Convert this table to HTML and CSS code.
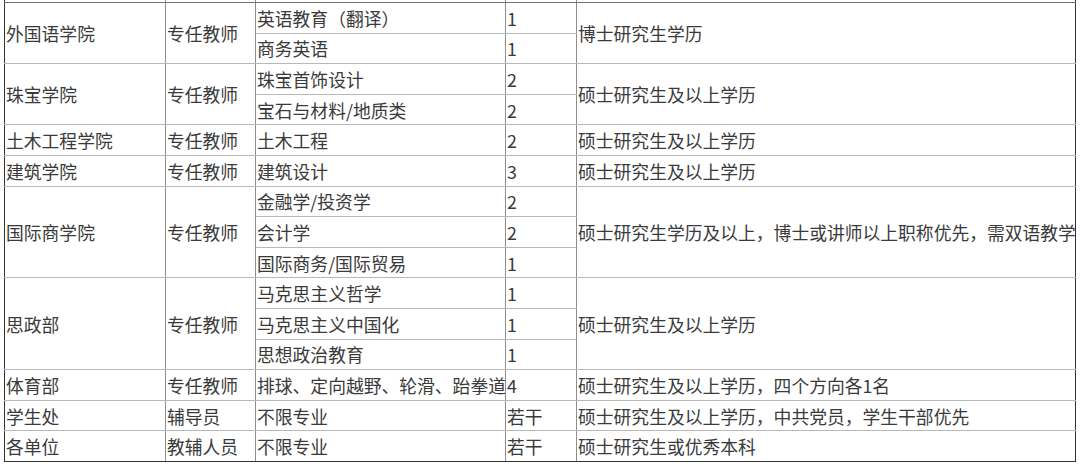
FILE: index.html
```html
<!DOCTYPE html>
<html lang="zh">
<head>
<meta charset="utf-8">
<link rel="stylesheet" href="styles.css">
</head>
<body>
<table class="jobs">
  <colgroup>
    <col class="c-unit"><col class="c-post"><col class="c-major"><col class="c-num"><col class="c-req">
  </colgroup>
  <tbody>
    <tr class="stub"><td></td><td></td><td></td><td></td><td></td></tr>
    <tr class="first"><td rowspan="2">外国语学院</td><td rowspan="2">专任教师</td><td>英语教育（翻译）</td><td>1</td><td rowspan="2">博士研究生学历</td></tr>
    <tr><td>商务英语</td><td>1</td></tr>
    <tr><td rowspan="2">珠宝学院</td><td rowspan="2">专任教师</td><td>珠宝首饰设计</td><td>2</td><td rowspan="2">硕士研究生及以上学历</td></tr>
    <tr><td>宝石与材料/地质类</td><td>2</td></tr>
    <tr><td>土木工程学院</td><td>专任教师</td><td>土木工程</td><td>2</td><td>硕士研究生及以上学历</td></tr>
    <tr><td>建筑学院</td><td>专任教师</td><td>建筑设计</td><td>3</td><td>硕士研究生及以上学历</td></tr>
    <tr><td rowspan="3">国际商学院</td><td rowspan="3">专任教师</td><td>金融学/投资学</td><td>2</td><td rowspan="3">硕士研究生学历及以上，博士或讲师以上职称优先，需双语教学</td></tr>
    <tr><td>会计学</td><td>2</td></tr>
    <tr><td>国际商务/国际贸易</td><td>1</td></tr>
    <tr><td rowspan="3">思政部</td><td rowspan="3">专任教师</td><td>马克思主义哲学</td><td>1</td><td rowspan="3">硕士研究生及以上学历</td></tr>
    <tr><td>马克思主义中国化</td><td>1</td></tr>
    <tr><td>思想政治教育</td><td>1</td></tr>
    <tr><td>体育部</td><td>专任教师</td><td>排球、定向越野、轮滑、跆拳道</td><td>4</td><td>硕士研究生及以上学历，四个方向各1名</td></tr>
    <tr><td>学生处</td><td>辅导员</td><td>不限专业</td><td>若干</td><td>硕士研究生及以上学历，中共党员，学生干部优先</td></tr>
    <tr><td>各单位</td><td>教辅人员</td><td>不限专业</td><td>若干</td><td>硕士研究生或优秀本科</td></tr>
  </tbody>
</table>
</body>
</html>
```

FILE: styles.css
```css
html, body {
  margin: 0;
  padding: 0;
  background: #ffffff;
}
body {
  padding-left: 4px;
}
.jobs {
  border-collapse: collapse;
  table-layout: fixed;
  width: 1071px;
  border-left: 1px solid #333333;
  border-right: 1px solid #333333;
  border-bottom: 1px solid #333333;
  border-top: hidden;
  font-family: "Noto Sans CJK SC", "Microsoft YaHei", sans-serif;
  font-size: 17.8px;
  color: #3a3a3a;
}
.c-unit { width: 161px; }
.c-post { width: 90px; }
.c-major { width: 250px; }
.c-num { width: 71px; }
.c-req { width: 499px; }
.jobs td {
  border-top: 1px solid #b8b8b8;
  border-bottom: 1px solid #b8b8b8;
  border-left: 1px solid #8e8e8e;
  border-right: 1px solid #8e8e8e;
  padding: 0 0 0 1px;
  height: 29.6px;
  line-height: 22px;
  white-space: nowrap;
  overflow: hidden;
  vertical-align: middle;
  text-align: left;
}
.jobs td:first-child { border-left: 1px solid #333333; }
.jobs td:last-child { border-right: 1px solid #333333; }
.jobs .stub td {
  height: 2px;
  padding: 0;
  border-top: hidden;
  border-bottom: 1px solid #707070;
  line-height: 0;
}
.jobs tr:last-child td { border-bottom: 1px solid #333333; }
```
